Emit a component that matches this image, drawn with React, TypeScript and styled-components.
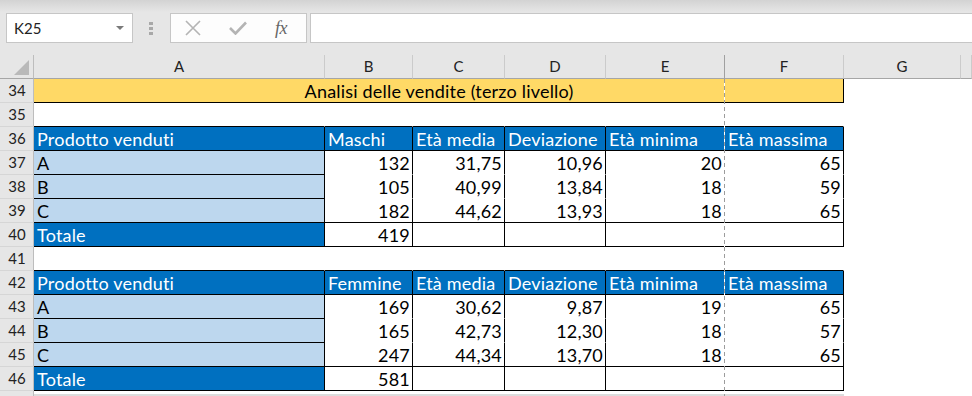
import React from "react";
import styled, { createGlobalStyle, css } from "styled-components";

const Global = createGlobalStyle`
  html, body { margin: 0; padding: 0; background: #fff; }
  body { width: 972px; height: 396px; overflow: hidden; font-family: Lato, "Liberation Sans", sans-serif; }
  * { box-sizing: border-box; }
`;

const Page = styled.div`
  width: 972px;
  height: 396px;
  overflow: hidden;
  background: #fff;
`;

const Toolbar = styled.div`
  height: 55px;
  display: flex;
  align-items: flex-start;
  padding: 13px 0 0 6px;
  background: linear-gradient(#d3d3d3 0px, #e6e6e6 12px, #e6e6e6 100%);
`;

const NameBox = styled.div`
  width: 127px;
  height: 30px;
  background: #fff;
  border: 1px solid #c6c6c6;
  display: flex;
  align-items: center;
  justify-content: space-between;
  padding: 0 8px 0 7px;
  font-size: 15px;
  color: #222;
`;

const DropArrow = styled.span`
  width: 0;
  height: 0;
  border-left: 4px solid transparent;
  border-right: 4px solid transparent;
  border-top: 4px solid #7a7a7a;
`;

const Grip = styled.div`
  width: 37px;
  height: 30px;
  display: flex;
  flex-direction: column;
  align-items: center;
  justify-content: center;
  gap: 2px;
  padding-right: 1px;
`;

const GripDot = styled.span`
  width: 4px;
  height: 3px;
  background: #a8a8a8;
`;

const FxBox = styled.div`
  width: 137px;
  height: 30px;
  background: #fdfdfd;
  border: 1px solid #c6c6c6;
  display: flex;
  align-items: center;
  padding-left: 14px;
  gap: 28px;
`;

const FxText = styled.span`
  font-family: "Liberation Serif", "DejaVu Serif", serif;
  font-style: italic;
  font-size: 18px;
  color: #666;
  margin-left: 0px;
  letter-spacing: -0.5px;
`;

const FormulaBar = styled.div`
  flex: 1;
  height: 30px;
  margin-left: 3px;
  margin-right: -2px;
  background: #fff;
  border: 1px solid #c6c6c6;
`;

const Sheet = styled.div`
  position: relative;
  display: grid;
  grid-template-columns: 34px 291px 88px 92px 101px 119px 119px 117px 1fr;
  grid-auto-rows: 24px;
  background: #fff;
`;

const Corner = styled.div`
  background: #e6e6e6;
  border-right: 1px solid #bdbdbd;
  border-bottom: 1px solid #a6a6a6;
  display: flex;
  align-items: flex-end;
  justify-content: flex-end;
  padding: 0 4px 3px 0;
`;

const ColHead = styled.div<{ $dark?: boolean }>`
  background: #e6e6e6;
  border-right: 1px solid ${(p) => (p.$dark ? "#a0a0a0" : "#cbcbcb")};
  border-bottom: 1px solid #a6a6a6;
  font-size: 15px;
  line-height: 23px;
  text-align: center;
  color: #222;
`;

const RowHead = styled.div`
  background: #e6e6e6;
  border-right: 1px solid #bdbdbd;
  border-bottom: 1px solid #d6d6d6;
  font-size: 15px;
  line-height: 23px;
  text-align: center;
  color: #222;
  padding-left: 1px;
`;

type Fill = "yellow" | "blue" | "light" | undefined;

const fills: Record<string, string> = {
  yellow: "#ffd966",
  blue: "#0070c0",
  light: "#bdd7ee",
};

const Cell = styled.div<{
  $fill?: Fill;
  $br?: boolean;
  $bb?: boolean;
  $align?: "left" | "right" | "center";
  $span?: number;
  $faint?: boolean;
}>`
  font-family: Lato, "Open Sans", sans-serif;
  font-size: 18px;
  letter-spacing: 0.2px;
  line-height: 24px;
  white-space: nowrap;
  overflow: visible;
  padding: 0 2px 0 3px;
  color: ${(p) => (p.$fill === "blue" ? "#fff" : "#000")};
  background: ${(p) => (p.$fill ? fills[p.$fill] : "transparent")};
  text-align: ${(p) => p.$align || "left"};
  border-right: 1px solid ${(p) => (p.$br ? "#000" : "transparent")};
  border-bottom: 1px solid ${(p) => (p.$bb ? "#000" : "transparent")};
  ${(p) => p.$span && css`grid-column: span ${p.$span};`}
  ${(p) =>
    p.$faint &&
    css`
      background: linear-gradient(#fff 0 3px, #dcdcdc 3px 5px, #fff 5px);
    `}
`;

const PageBreak = styled.div`
  position: absolute;
  left: 724px;
  top: 24px;
  bottom: 0;
  width: 1px;
  background: repeating-linear-gradient(#9c9c9c 0 4px, #ffffff 4px 7px);
`;

const Tri = () => (
  <svg width="15" height="15" viewBox="0 0 15 15">
    <polygon points="15,0 15,15 0,15" fill="#b9b9b9" />
  </svg>
);

const XIcon = () => (
  <svg width="16" height="16" viewBox="0 0 16 16">
    <path d="M1 1 L15 15 M15 1 L1 15" stroke="#b4b4b4" strokeWidth="1.6" fill="none" />
  </svg>
);

const CheckIcon = () => (
  <svg width="18" height="14" viewBox="0 0 18 14">
    <path d="M1 7 L6.5 12.5 L17 1.5" stroke="#b4b4b4" strokeWidth="2.6" fill="none" />
  </svg>
);

type Row = {
  n: number;
  label?: string;
  cells: React.ReactNode;
};

type Stats = { label: string; n: string; media: string; dev: string; min: string; max: string };

const table1: Stats[] = [
  { label: "A", n: "132", media: "31,75", dev: "10,96", min: "20", max: "65" },
  { label: "B", n: "105", media: "40,99", dev: "13,84", min: "18", max: "59" },
  { label: "C", n: "182", media: "44,62", dev: "13,93", min: "18", max: "65" },
];

const table2: Stats[] = [
  { label: "A", n: "169", media: "30,62", dev: "9,87", min: "19", max: "65" },
  { label: "B", n: "165", media: "42,73", dev: "12,30", min: "18", max: "57" },
  { label: "C", n: "247", media: "44,34", dev: "13,70", min: "18", max: "65" },
];

const Tail = () => (
  <>
    <Cell />
    <Cell />
  </>
);

const Spacer = () => (
  <>
    {[0, 1, 2, 3, 4, 5].map((i) => (
      <Cell key={i} $bb />
    ))}
    <Tail />
  </>
);

const headerRow = (first: string) =>
  ["Prodotto venduti", first, "Età media", "Deviazione", "Età minima", "Età massima"].map((t, i) => (
    <Cell key={i} $fill="blue" $br $bb>
      {t}
    </Cell>
  ));

function tableRows(start: number, first: string, data: Stats[], total: string): Row[] {
  const rows: Row[] = [];
  rows.push({ n: start, cells: <>{headerRow(first)}<Tail /></> });
  data.forEach((d, i) => {
    const last = i === data.length - 1;
    rows.push({
      n: start + 1 + i,
      cells: (
        <>
          <Cell $fill="light" $br $bb>{d.label}</Cell>
          {[d.n, d.media, d.dev, d.min, d.max].map((v, j) => (
            <Cell key={j} $align="right" $br $bb={last}>{v}</Cell>
          ))}
          <Tail />
        </>
      ),
    });
  });
  rows.push({
    n: start + 4,
    cells: (
      <>
        <Cell $fill="blue" $br $bb>Totale</Cell>
        <Cell $align="right" $br $bb>{total}</Cell>
        <Cell $br $bb />
        <Cell $br $bb />
        <Cell $br $bb />
        <Cell $br $bb />
        <Tail />
      </>
    ),
  });
  return rows;
}

const rows: Row[] = [
  {
    n: 34,
    cells: (
      <>
        <Cell $fill="yellow" $span={6} $align="center" $br $bb>
          Analisi delle vendite (terzo livello)
        </Cell>
        <Tail />
      </>
    ),
  },
  { n: 35, cells: <Spacer /> },
  ...tableRows(36, "Maschi", table1, "419"),
  { n: 41, cells: <Spacer /> },
  ...tableRows(42, "Femmine", table2, "581"),
  {
    n: 47,
    label: "",
    cells: (
      <>
        {[0, 1, 2, 3, 4, 5].map((i) => (
          <Cell key={i} $faint />
        ))}
        <Tail />
      </>
    ),
  },
];

const columns = ["A", "B", "C", "D", "E", "F", "G", ""];

export default function App() {
  return (
    <Page>
      <Global />
      <Toolbar>
        <NameBox>
          <span>K25</span>
          <DropArrow />
        </NameBox>
        <Grip>
          <GripDot />
          <GripDot />
          <GripDot />
        </Grip>
        <FxBox>
          <XIcon />
          <CheckIcon />
          <FxText>fx</FxText>
        </FxBox>
        <FormulaBar />
      </Toolbar>
      <Sheet>
        <Corner>
          <Tri />
        </Corner>
        {columns.map((c, i) => (
          <ColHead key={i} $dark={c === "E"}>
            {c}
          </ColHead>
        ))}
        {rows.map((r) => (
          <React.Fragment key={r.n}>
            <RowHead>{r.label ?? r.n}</RowHead>
            {r.cells}
          </React.Fragment>
        ))}
        <PageBreak />
      </Sheet>
    </Page>
  );
}
